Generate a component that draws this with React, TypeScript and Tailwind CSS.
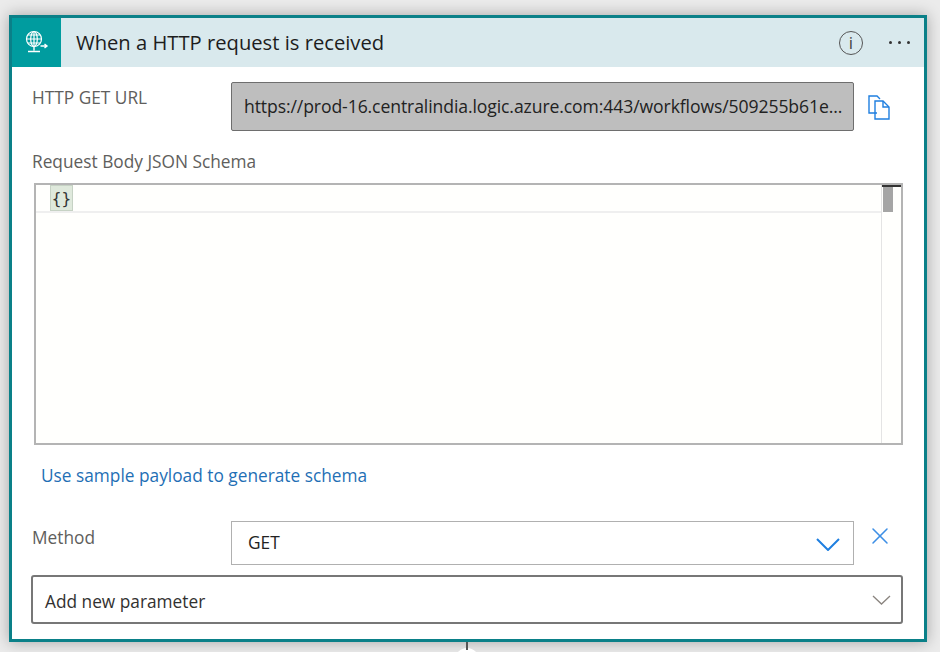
import React from 'react';
import { X } from 'lucide-react';

const font = 'font-["Open_Sans","Noto_Sans",sans-serif]';

const GlobeIcon = () => (
  <svg width="30" height="30" viewBox="0 0 30 30" fill="none" stroke="#fff" strokeWidth="1.2">
    <circle cx="12" cy="11" r="7.500" />
    <ellipse cx="12" cy="11" rx="3.300" ry="7.500" />
    <path d="M4.500 11h15M5.500 7h13M5.500 15h13M12 3.500v15" />
    <path d="M12 18.500v4M6 23.500h12M18.500 18h6M22.500 16l2.500 2-2.500 2" strokeWidth="1.400" />
  </svg>
);

const CopyIcon = () => (
  <svg width="24" height="26" viewBox="0 0 24 26" fill="none" stroke="#1f7fe0" strokeWidth="1.4">
    <path d="M10 19H2V2h8l3 3" />
    <path d="M8 7h8l6 6v12H8z" />
    <path d="M16 7v6h6" />
  </svg>
);

const Chevron = ({ w, h, color, sw }: { w: number; h: number; color: string; sw: number }) => (
  <svg width={w} height={h} viewBox={`0 0 ${w} ${h}`} fill="none" stroke={color} strokeWidth={sw}>
    <path d={`M1 1L${w / 2} ${h - 1}L${w - 1} 1`} />
  </svg>
);

export default function App() {
  return (
    <div className={`w-[940px] h-[652px] overflow-hidden bg-[#ebebeb] pt-[15px] pl-[9px] relative ${font}`}>
      <div className="w-[918px] h-[627px] border-[3px] border-[#0a8088] bg-white shadow-[0_0_14px_rgba(0,0,0,0.3)]">
        {/* header */}
        <div className="h-[49px] bg-[#d9e9ed] flex items-center">
          <div className="w-[49px] h-[49px] bg-[#009c9f] flex items-center justify-center">
            <GlobeIcon />
          </div>
          <div className="ml-[15px] text-[20.200px] text-[#1d1d1d]">When a HTTP request is received</div>
          <div className="ml-auto mr-[12px] flex items-center">
            <div className="w-[24px] h-[24px] rounded-full border-[1.5px] border-[#555] flex items-center justify-center text-[17px] text-[#444] leading-none">
              i
            </div>
            <div className="ml-[26px] flex gap-[6px] w-[23px]">
              <span className="w-[3px] h-[3px] rounded-full bg-[#333]" />
              <span className="w-[3px] h-[3px] rounded-full bg-[#333]" />
              <span className="w-[3px] h-[3px] rounded-full bg-[#333]" />
            </div>
          </div>
        </div>

        <div className="pl-[19px] pr-[19px]">
          {/* url row */}
          <div className="flex mt-[15px]">
            <div className="w-[200px] pl-[1px] text-[17.300px] text-[#605e5c] leading-[30px] mt-[1px]">HTTP GET URL</div>
            <div className="w-[623px] h-[49px] bg-[#bebebe] border border-[#6e6e6e] rounded-[2px] flex items-center pl-[12px] pb-[1px] text-[17.600px] tracking-[-0.1px] text-[#222] whitespace-nowrap overflow-hidden">
              https://prod-16.centralindia.logic.azure.com:443/workflows/509255b61e...
            </div>
            <div className="ml-[13px] mt-[12px]">
              <CopyIcon />
            </div>
          </div>

          {/* schema */}
          <div className="mt-[18px] pl-[1px] text-[17.300px] text-[#605e5c] leading-[26px]">Request Body JSON Schema</div>
          <div className="mt-[8px] ml-[3px] w-[869px] h-[262px] border-2 border-[#b4b4b4] flex bg-[#fffffd]">
            <div className="flex-1 h-[28px] border-b-2 border-[#efefef] pl-[14px]">
              <span className='inline-block w-[23px] h-[26px] bg-[#dfe9dc] border border-[#c6d2c4] text-center text-[16px] leading-[26px] text-[#333] font-["DejaVu_Sans_Mono",monospace]'>
                {'{}'}
              </span>
            </div>
            <div className="w-[20px] border-l border-[#e4e4e4]">
              <div className="h-[2px] bg-[#333]" />
              <div className="ml-[1px] w-[10px] h-[25px] bg-[#a5a5a5]" />
            </div>
          </div>

          {/* link */}
          <div className="mt-[18px] ml-[10px] text-[17.300px] leading-[26px] text-[#1f6fb5]">Use sample payload to generate schema</div>

          {/* method */}
          <div className="flex mt-[32px]">
            <div className="w-[200px] pl-[1px] text-[17.300px] text-[#605e5c] leading-[30px] mt-[2px]">Method</div>
            <div className="w-[623px] h-[44px] border border-[#b0b0b0] flex items-center justify-between pl-[16px] pr-[13px] text-[17.300px] text-[#222]">
              GET
              <span className="mt-[2px]">
                <Chevron w={24} h={13} color="#1f7fe0" sw={2} />
              </span>
            </div>
            <X className="ml-[12px] mt-[1px] text-[#3d8fe6]" size={28} strokeWidth={1.3} />
          </div>

          {/* add parameter */}
          <div className="mt-[10px] w-[872px] h-[49px] border-2 border-[#777777] rounded-[3px] flex items-center justify-between pl-[12px] pr-[10px] text-[17.300px] text-[#323130]">
            <span className="mt-[4px]">Add new parameter</span>
            <Chevron w={19} h={10} color="#8a847f" sw={1.300} />
          </div>
        </div>
      </div>

      {/* connector below the card */}
      <div className="absolute left-[455px] top-[648px] w-[24px] h-[24px] rounded-full bg-white" />
      <div className="absolute left-[466px] top-[642px] w-[2px] h-[8px] bg-[#555]" />
    </div>
  );
}
